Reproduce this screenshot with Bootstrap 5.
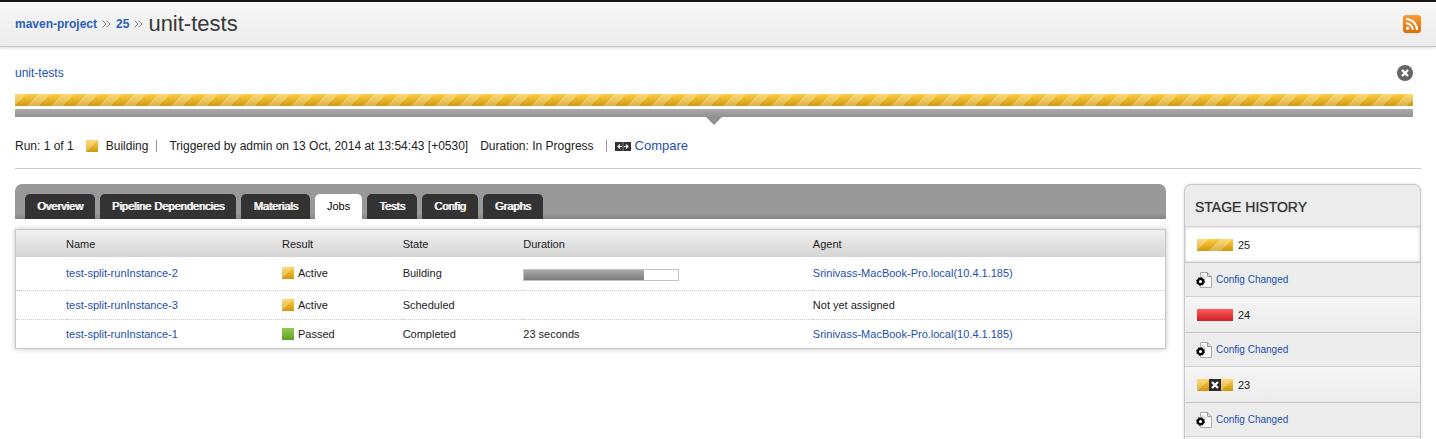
<!DOCTYPE html>
<html lang="en">
<head>
<meta charset="utf-8">
<meta name="viewport" content="width=device-width, initial-scale=1">
<title>maven-project / 25 / unit-tests</title>
<link href="https://cdn.jsdelivr.net/npm/bootstrap@5.3.0/dist/css/bootstrap.min.css" rel="stylesheet">
<style>
  body { font: 12px/16px "Liberation Sans", Arial, sans-serif; color: #222; background: #fff; height: 100vh; overflow: hidden; }
  a { color: #1c4fb0; text-decoration: none; }
  a:hover { text-decoration: underline; }
  svg { display: block; flex: none; }

  .page-top { border-top: 2px solid #1b1718; border-bottom: 1px solid #c6c6c6; background: linear-gradient(#f7f7f7, #ececec); box-shadow: 0 1px 3px rgba(0,0,0,.15); height: 47px; padding: 0 15px; }
  .trail { gap: 5px; line-height: 24px; }
  .trail a { font-weight: bold; color: #2a60bb; }
  .trail h1 { font-size: 22px; line-height: 24px; color: #383838; }

  .page-main { padding: 18px 15px 0; height: calc(100vh - 47px); overflow: hidden; }
  .stage-area { padding-right: 8px; }
  .stage-head { margin-bottom: 13px; }
  .icon-btn { border: 0; padding: 0; background: none; }

  .building, .failed, .passed { height: 12px; flex: none; }
  .building { background: linear-gradient(135deg, rgba(255,255,255,.26) 25%, transparent 25%, transparent 50%, rgba(255,255,255,.26) 50%, rgba(255,255,255,.26) 75%, transparent 75%) 0 0 / 24px 24px, linear-gradient(#ffcd46, #cd9910); }
  .failed { background: linear-gradient(#ff5c5c, #cb2027); }
  .passed { background: linear-gradient(#93cc50, #5c9d23); }
  .swatch { width: 12px; }
  .stage-chip { width: 36px; }
  .stage-rule { height: 8px; margin-top: 3px; background: linear-gradient(#a9a9a9, #929292); }
  .pointer { width: 16px; height: 8px; background: #929292; clip-path: polygon(0 0, 100% 0, 50% 100%); }

  .run-line { padding: 13px 0 14px; border-bottom: 1px solid #ccc; }
  .divider { width: 1px; height: 12px; background: #999; }
  .compare-link { font-size: 13px; gap: 4px; }

  .columns { gap: 18px; margin-top: 15px; }
  .tab-strip { background: linear-gradient(#999 85%, #838383); border-radius: 7px 7px 0 0; padding: 10px 10px 0; gap: 5px; font-size: 11px; }
  .tab-strip .nav-link { padding: 4px 12px 5px; color: #fff; text-shadow: 1px 0 #fff; background: #333; border-radius: 5px 5px 0 0; }
  .tab-strip .nav-link.active { color: #000; text-shadow: none; background: #fff; }

  .jobs-box { margin-top: 10px; border: 1px solid #c8c8c8; box-shadow: 0 0 5px rgba(0,0,0,.25); }
  .jobs { font-size: 11px; color: #222; table-layout: fixed; }
  .jobs th, .jobs td { padding: 6px 0; background: none; border: 0; color: #222; line-height: 16px; }
  .jobs th { font-weight: normal; padding-bottom: 5px; }
  .jobs thead { background: linear-gradient(#f0f0f0, #d5d5d5); }
  .jobs tbody tr + tr { border-top: 1px dotted #ccc; }
  .jobs tbody tr:first-child td { padding: 8px 0 9px; }
  .job-progress { width: 156px; height: 12px; margin-top: 3px; border: 1px solid #c4c4c4; border-radius: 0; background: #fff; }
  .job-progress .progress-bar { background: linear-gradient(#aaa, #7c7c7c); }
  .col-pad { width: 50px; }
  .col-name { width: 19%; }
  .col-mid { width: 10%; }

  .history { width: 237px; border: 1px solid #c8c8c8; border-radius: 7px 7px 0 0; background: #ececec; box-shadow: 0 0 3px rgba(0,0,0,.15); font-size: 11px; }
  .history h2 { font-size: 14px; line-height: 18px; padding: 13px 10px 10px; color: #333; text-shadow: 0 0 1px #777; }
  .run-row, .config-row { padding: 0 12px; height: 36px; }
  .run-row { gap: 5px; background: linear-gradient(#f5f5f5, #ececec); border-top: 1px solid #d2d2d2; }
  .run-row.current { background: #fff; box-shadow: inset 0 0 3px rgba(0,0,0,.25); }
  .config-row { height: 34px; padding-left: 11px; gap: 4px; font-size: 10px; border-top: 1px solid #c4c4c4; }
</style>
</head>
<body>
<svg width="0" height="0" class="position-absolute" aria-hidden="true">
  <symbol id="config-icon" viewBox="0 0 16 16">
    <path d="M4.500.5h7l4 4v11h-11z" fill="#fcfcfc" stroke="#aaa"/>
    <path d="M11.500.5v4h4" fill="#ddd" stroke="#999"/>
    <path d="M6 3l3 3-1 2" fill="none" stroke="#ddd" stroke-width="2"/>
    <circle cx="4.500" cy="9.500" r="4" fill="none" stroke="#000" stroke-width="1" stroke-dasharray="1.500 1.640"/>
    <circle cx="4.500" cy="9.500" r="2.700" fill="#fff" stroke="#000" stroke-width="2.200"/>
  </symbol>
</svg>

<header class="page-top d-flex align-items-center justify-content-between">
  <nav class="trail d-flex align-items-center" aria-label="Breadcrumb">
    <a href="#">maven-project</a>
    <svg width="9" height="8" viewBox="0 0 9 8" fill="none" stroke="#888"><path d="M.5.5L4 4 .5 7.500M4.500.5L8 4 4.500 7.500"/></svg>
    <a href="#">25</a>
    <svg width="9" height="8" viewBox="0 0 9 8" fill="none" stroke="#888"><path d="M.5.5L4 4 .5 7.500M4.500.5L8 4 4.500 7.500"/></svg>
    <h1 class="m-0 fw-normal">unit-tests</h1>
  </nav>
  <a href="#" aria-label="Feed">
    <svg width="18" height="18" viewBox="0 0 18 18">
      <defs><linearGradient id="feed" x2="0" y2="1"><stop stop-color="#ff9a35"/><stop offset="1" stop-color="#e06c00"/></linearGradient></defs>
      <rect width="18" height="18" rx="3" fill="url(#feed)"/>
      <circle cx="4.700" cy="13.300" r="1.700" fill="#fff"/>
      <path d="M3 8.200a6.800 6.800 0 0 1 6.800 6.800M3 4a11 11 0 0 1 11 11" fill="none" stroke="#fff" stroke-width="2.100"/>
    </svg>
  </a>
</header>

<main class="page-main">
  <section class="stage-area">
    <div class="stage-head d-flex align-items-center justify-content-between">
      <a href="#">unit-tests</a>
      <button type="button" class="icon-btn" aria-label="Cancel stage">
        <svg width="16" height="16" viewBox="0 0 16 16">
          <circle cx="8" cy="8" r="8" fill="#666"/>
          <path d="M5 5l6 6M11 5l-6 6" stroke="#fff" stroke-width="2.400"/>
        </svg>
      </button>
    </div>
    <div class="building"></div>
    <div class="stage-rule"></div>
    <div class="pointer mx-auto"></div>
  </section>

  <section class="run-line d-flex align-items-center">
    <span class="me-2 pe-1">Run: 1 of 1</span>
    <span class="building swatch me-2"></span>
    <span class="me-2">Building</span>
    <span class="divider me-2"></span>
    <span class="ms-1 me-2 pe-1">Triggered by admin on 13 Oct, 2014 at 13:54:43 [+0530]</span>
    <span class="me-2 pe-1">Duration: In Progress</span>
    <span class="divider me-2"></span>
    <a href="#" class="compare-link d-flex align-items-center">
      <svg width="16" height="9" viewBox="0 0 16 9">
        <path d="M0 0h16v9H0z" fill="#333"/><path d="M7.500 0h1v9h-1z" fill="#888"/>
        <path d="M3 4.500h4M5 2.500l-2 2 2 2M9 4.500h4M11 2.500l2 2-2 2" fill="none" stroke="#eee" stroke-width="1.200"/>
      </svg>
      Compare
    </a>
  </section>

  <div class="columns d-flex align-items-start">
    <section class="flex-grow-1">
      <nav class="tab-strip nav">
        <a class="nav-link" href="#">Overview</a>
        <a class="nav-link" href="#">Pipeline Dependencies</a>
        <a class="nav-link" href="#">Materials</a>
        <a class="nav-link active" href="#" aria-current="page">Jobs</a>
        <a class="nav-link" href="#">Tests</a>
        <a class="nav-link" href="#">Config</a>
        <a class="nav-link" href="#">Graphs</a>
      </nav>
      <div class="jobs-box">
        <table class="jobs table mb-0">
          <colgroup><col style="width:50px"><col style="width:18.800%"><col style="width:10.500%"><col style="width:10.500%"><col style="width:25.200%"><col></colgroup>
          <thead>
            <tr><th></th><th scope="col">Name</th><th scope="col">Result</th><th scope="col">State</th><th scope="col">Duration</th><th scope="col">Agent</th></tr>
          </thead>
          <tbody>
            <tr>
              <td></td><td><a href="#">test-split-runInstance-2</a></td>
              <td><div class="d-flex align-items-center"><span class="building swatch me-1"></span>Active</div></td>
              <td>Building</td>
              <td class="align-middle"><div class="progress job-progress" role="progressbar" aria-label="Job progress" aria-valuenow="78" aria-valuemin="0" aria-valuemax="100"><div class="progress-bar" style="width:78%"></div></div></td>
              <td><a href="#">Srinivass-MacBook-Pro.local(10.4.1.185)</a></td>
            </tr>
            <tr>
              <td></td><td><a href="#">test-split-runInstance-3</a></td>
              <td><div class="d-flex align-items-center"><span class="building swatch me-1"></span>Active</div></td>
              <td>Scheduled</td><td></td><td>Not yet assigned</td>
            </tr>
            <tr>
              <td></td><td><a href="#">test-split-runInstance-1</a></td>
              <td><div class="d-flex align-items-center"><span class="passed swatch me-1"></span>Passed</div></td>
              <td>Completed</td><td>23 seconds</td>
              <td><a href="#">Srinivass-MacBook-Pro.local(10.4.1.185)</a></td>
            </tr>
          </tbody>
        </table>
      </div>
    </section>

    <aside class="history flex-shrink-0">
      <h2 class="m-0">STAGE HISTORY</h2>
      <div class="run-row current d-flex align-items-center"><span class="building stage-chip"></span>25</div>
      <div class="config-row d-flex align-items-center"><svg width="16" height="16"><use href="#config-icon"/></svg><a href="#">Config Changed</a></div>
      <div class="run-row d-flex align-items-center"><span class="failed stage-chip"></span>24</div>
      <div class="config-row d-flex align-items-center"><svg width="16" height="16"><use href="#config-icon"/></svg><a href="#">Config Changed</a></div>
      <div class="run-row d-flex align-items-center">
        <span class="d-flex"><span class="building swatch"></span><svg width="12" height="12" viewBox="0 0 12 12"><path d="M0 0h12v12H0z" fill="#2b2b2b"/><path d="M3 3l6 6M9 3l-6 6" stroke="#fff" stroke-width="2.200"/></svg><span class="building swatch"></span></span>23
      </div>
      <div class="config-row d-flex align-items-center"><svg width="16" height="16"><use href="#config-icon"/></svg><a href="#">Config Changed</a></div>
      <div class="run-row"></div>
    </aside>
  </div>
</main>
<script src="https://cdn.jsdelivr.net/npm/bootstrap@5.3.0/dist/js/bootstrap.bundle.min.js"></script>
</body>
</html>
